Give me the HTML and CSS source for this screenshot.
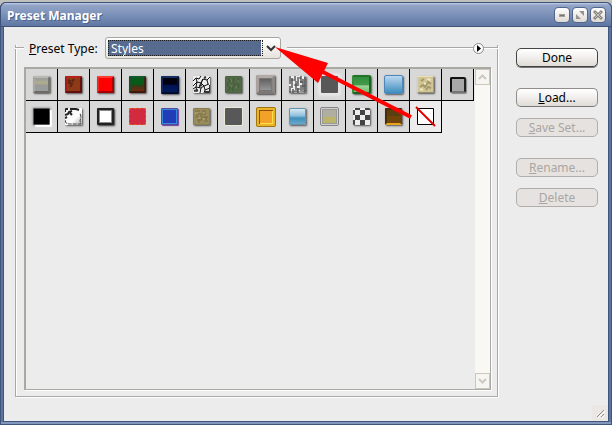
FILE: index.html
```html
<!DOCTYPE html>
<html lang="en">
<head>
  <meta charset="UTF-8">
  <meta name="viewport" content="width=device-width, initial-scale=1.0">
  <title>Preset Manager</title>
  <link rel="stylesheet" href="styles.css">
</head>
<body>
  <div class="window">
    <!-- Title bar -->
    <div class="title-bar">
      <h1>Preset Manager</h1>
      <div class="window-buttons">
        <button type="button" aria-label="Minimize"><svg width="14" height="14" viewBox="0 0 14 14"><path d="M4 6h6v3H4z" fill="#a19d98"/><path d="M5 7h4v1H5z" fill="#77736f"/></svg></button>
        <button type="button" aria-label="Maximize"><svg width="14" height="14" viewBox="0 0 14 14"><path d="M6 3h5v5zM3 6v5h5z" fill="#98948f"/></svg></button>
        <button type="button" aria-label="Close"><svg width="14" height="14" viewBox="0 0 14 14"><path d="M3 3l8 8M11 3l-8 8" stroke="#8a8681" stroke-width="3"/><path d="M4 4l6 6M10 4l-6 6" stroke="#c5c1bc"/></svg></button>
      </div>
    </div>

    <!-- Dialog -->
    <div class="dialog">
      <div class="group">
        <div class="group-head">
          <label for="presetType"><u>P</u>reset Type:</label>
          <div class="select-box">
            <select id="presetType">
              <option>Styles</option>
            </select>
            <svg class="chevron" width="10" height="8" viewBox="0 0 10 8"><path d="M1 2l4 4 4-4" fill="none" stroke="#333" stroke-width="2"/></svg>
          </div>
          <span class="rule"></span>
          <button type="button" class="menu-button" aria-label="Preset menu"><svg width="11" height="11" viewBox="0 0 11 11"><circle cx="5.500" cy="5.500" r="5" fill="#fff" stroke="#888"/><path d="M4 2v7l4-3.500z"/></svg></button>
          <span class="rule rule-end"></span>
        </div>
        <div class="list">
          <div class="tiles">
            <button type="button" class="tile" aria-label="Style 1"><span class="swatch stone"></span></button>
            <button type="button" class="tile" aria-label="Style 2"><span class="swatch brick"><svg width="13" height="13" viewBox="0 0 13 13"><path d="M1 2l2 1-1 2 3 1-2 3M7 1l-2 3" fill="none" stroke="#5e2410" stroke-width="2"/></svg></span></button>
            <button type="button" class="tile" aria-label="Style 3"><span class="swatch red"></span></button>
            <button type="button" class="tile" aria-label="Style 4"><span class="swatch forest"></span></button>
            <button type="button" class="tile" aria-label="Style 5"><span class="swatch navy"></span></button>
            <button type="button" class="tile" aria-label="Style 6"><span class="swatch marble"><svg width="17" height="17" viewBox="0 0 17 17"><path d="M0 5l3-3 3 1 2-3M3 2l1 4-4 4M4 6l4 1 2-4 4 1 3-3M10 3l-2 4 3 3 5-2M4 6l-1 5 5 1 3-2 1 4 5-2M3 11l-3 2M8 12l-1 5M3 11l1 5M12 14l-1 3M14 4l1 4M8 7l-2 5" fill="none" stroke="#111"/><path d="M1 15l4-1M12 16h5V9M9 9l-3 1M13 1l-2 1" fill="none" stroke="#333" stroke-width="2"/></svg></span></button>
            <button type="button" class="tile" aria-label="Style 7"><span class="swatch moss"><svg width="15" height="15" viewBox="0 0 15 15"><path d="M2 1l2 3-3 3 3 4-2 3M8 1l-1 4 2 3-3 3 1 3M13 1l-2 5 2 3-2 4" fill="none" stroke="#405638"/><path d="M5 2l1 3M10 9l1 3M4 8l2 2M12 3v3" fill="none" stroke="#6d835e"/></svg></span></button>
            <button type="button" class="tile" aria-label="Style 8"><span class="swatch steel"></span></button>
            <button type="button" class="tile" aria-label="Style 9"><span class="swatch bark"><svg width="17" height="17" viewBox="0 0 17 17"><path d="M1 0v8M1 10v7M3 2v10M4 13v4M6 0v5M7 5v9M9 1v9M9 12v5M12 0v7M12 9v6M14 3v11M16 1v15" stroke="#111"/><path d="M2 4h3M5 9h3M8 13h3M11 6h3M13 15h3M5 15h4M10 2h2M13 10h3" stroke="#444"/><path d="M16 0v17M0 16h17" stroke="#555"/></svg></span></button>
            <button type="button" class="tile" aria-label="Style 10"><span class="swatch glow"></span></button>
            <button type="button" class="tile" aria-label="Style 11"><span class="swatch green"></span></button>
            <button type="button" class="tile" aria-label="Style 12"><span class="swatch sky"></span></button>
            <button type="button" class="tile" aria-label="Style 13"><span class="swatch sand"><svg width="15" height="15" viewBox="0 0 15 15"><path d="M2 10l3-2 2 2 3-5 3 2M8 13l2-3 3 1M3 4l3-2" fill="none" stroke="#a59869" stroke-width="2"/><path d="M9 2l4 1M2 12l3 1M6 6l2 1" fill="none" stroke="#ece4bb" stroke-width="2"/></svg></span></button>
            <button type="button" class="tile" aria-label="Style 14"><span class="swatch outline"></span></button>
            <button type="button" class="tile" aria-label="Style 15"><span class="swatch black"></span></button>
            <button type="button" class="tile" aria-label="Style 16"><span class="swatch torn"><svg width="17" height="17" viewBox="0 0 17 17"><path d="M0 4V1h3M5 1h6l3 1M0 7l3-1 1-2 3-1M5 5l2 2M0 10l2-1" fill="none" stroke="#222" stroke-width="2"/><path d="M0 12l1 3 3 1h12l-1-3 1-4-1-4" fill="none" stroke="#444" stroke-dasharray="4 1"/></svg></span></button>
            <button type="button" class="tile" aria-label="Style 17"><span class="swatch white"></span></button>
            <button type="button" class="tile" aria-label="Style 18"><span class="swatch lava"></span></button>
            <button type="button" class="tile" aria-label="Style 19"><span class="swatch blue"></span></button>
            <button type="button" class="tile" aria-label="Style 20"><span class="swatch burlap"><svg width="15" height="15" viewBox="0 0 15 15"><path d="M1 2h5M8 2h4M4 5h7M1 8h4M8 8h6M3 11h5M10 12h4M3 3v4M7 6v5M11 3v3M12 8v3M5 10v4" stroke="#786c42"/><path d="M1 4h3M9 4h2M4 9h3M9 10h2" stroke="#b9ad7b"/></svg></span></button>
            <button type="button" class="tile" aria-label="Style 21"><span class="swatch grey"></span></button>
            <button type="button" class="tile" aria-label="Style 22"><span class="swatch gold"></span></button>
            <button type="button" class="tile" aria-label="Style 23"><span class="swatch water"></span></button>
            <button type="button" class="tile" aria-label="Style 24"><span class="swatch olive"></span></button>
            <button type="button" class="tile" aria-label="Style 25"><span class="swatch checker"></span></button>
            <button type="button" class="tile" aria-label="Style 26"><span class="swatch amber"></span></button>
            <button type="button" class="tile none" aria-label="No style"><svg width="21" height="21" viewBox="0 0 21 21"><path d="M2.500 2.500h16v16h-16z" fill="#fff" stroke="#000"/><path d="M1 1l19 19" stroke="#e00000" stroke-width="2"/></svg></button>
          </div>
          <div class="scrollbar">
            <button type="button" aria-label="Scroll up"><svg width="9" height="7" viewBox="0 0 9 7"><path d="M1 5l3.500-3.500L8 5" fill="none" stroke="#ccc8c2" stroke-width="2"/></svg></button>
            <button type="button" aria-label="Scroll down"><svg width="9" height="7" viewBox="0 0 9 7"><path d="M1 1l3.500 3.500L8 1" fill="none" stroke="#ccc8c2" stroke-width="2"/></svg></button>
          </div>
        </div>
      </div>

      <div class="actions">
        <button type="button" class="done">Done</button>
        <button type="button" class="spaced"><u>L</u>oad...</button>
        <button type="button" disabled><u>S</u>ave Set...</button>
        <button type="button" class="spaced" disabled><u>R</u>ename...</button>
        <button type="button" disabled><u>D</u>elete</button>
      </div>
    </div>
    <svg class="grip" width="16" height="16" viewBox="0 0 16 16"><path d="M5 12l7-7M9 12l3-3" stroke="#8f8c88"/><path d="M6 13l7-7M10 13l3-3" stroke="#fff"/></svg>

    <!-- Arrow pointing at the drop-down -->
    <svg class="arrow" width="140" height="75" viewBox="0 0 140 75"><path d="M1 2l53 16-10 20z" fill="#f00"/><path d="M47 26l90 46" stroke="#f00" stroke-width="4"/></svg>
  </div>
</body>
</html>
```

FILE: styles.css
```css
* {
  box-sizing: border-box;
}
body {
  margin: 0;
  padding-top: 2px;
  min-height: 100vh;
  display: flex;
  background-color: #c0c0bc;
  font-family: 'Noto Sans', sans-serif;
  font-size: 12px;
  color: #000;
}
button,
select {
  font: inherit;
  color: inherit;
  margin: 0;
  padding: 0;
}
svg {
  display: block;
}
.window {
  position: relative;
  flex: 1;
  display: flex;
  flex-direction: column;
  padding: 0 4px 4px;
  background-color: #5c759f;
  border-radius: 6px 6px 0 0;
  box-shadow: inset 1px 0 #41557b, inset -1px -1px #41557b, inset 0 -3px #8397bd;
}
.title-bar {
  display: flex;
  align-items: center;
  justify-content: space-between;
  height: 25px;
  margin: 0 -4px;
  padding: 1px 5px 0 6px;
  border: 1px solid #3f5378;
  border-bottom-color: #3b5079;
  border-radius: 6px 6px 0 0;
  background: linear-gradient(#c5d0e5 0, #93a5c8 2px, #8195bb 10px, #5d76a2 100%);
}
.title-bar h1 {
  margin: 0;
  font-size: 12px;
  font-weight: bold;
  color: #fff;
  text-shadow: 1px 1px #4b628c;
}
.window-buttons {
  display: flex;
  gap: 2px;
}
.window-buttons button {
  display: grid;
  place-items: center;
  width: 16px;
  height: 16px;
  border: 1px solid #52668b;
  border-radius: 4px;
  background: linear-gradient(#fff, #dedad5);
}
.dialog {
  flex: 1;
  display: flex;
  gap: 18px;
  padding: 10px 10px 24px 11px;
  background-color: #ececec;
  box-shadow: 0 0 0 1px #41557b;
}

/* Group frame */
.group {
  flex: 1;
  position: relative;
  display: flex;
  flex-direction: column;
  padding: 0 7px 7px 9px;
}
.group::before {
  content: '';
  position: absolute;
  inset: 8px 0 0;
  border: 1px solid #a8a8a4;
  border-top: none;
  box-shadow: inset 1px 0 #fff, 1px 1px #fff;
}
.group-head {
  position: relative;
  display: flex;
  align-items: center;
  height: 22px;
  margin: 0 -7px 8px -9px;
}
.group-head::before {
  content: '';
  width: 9px;
  height: 2px;
  margin-right: 5px;
  background: linear-gradient(#a8a8a4 50%, #fff 50%);
}
.group-head label {
  width: 76px;
  white-space: nowrap;
}
.rule {
  flex: 1;
  height: 2px;
  margin-left: 6px;
  background: linear-gradient(#a8a8a4 50%, #fff 50%);
}
.rule-end {
  flex: 0 0 14px;
  margin: 0;
}
.menu-button {
  border: none;
  background: none;
}
.select-box {
  position: relative;
  width: 176px;
  height: 22px;
}
.select-box select {
  appearance: none;
  width: 100%;
  height: 22px;
  padding: 0 18px 0 5px;
  border: 1px solid #a9a5a0;
  border-radius: 3px;
  outline: none;
  color: #fff;
  background: linear-gradient(#566b8e, #566b8e) 2px 2px / 153px 16px no-repeat, linear-gradient(#fff, #e7e3de);
}
.select-box::after {
  content: '';
  position: absolute;
  inset: 3px 18px 3px 3px;
  border: 1px dotted #1a1a1a;
  pointer-events: none;
}
.chevron {
  position: absolute;
  right: 5px;
  top: 7px;
  pointer-events: none;
}

/* Preset list */
.list {
  position: relative;
  flex: 1;
  display: flex;
  justify-content: space-between;
  border: 2px solid #a9a9a3;
  border-width: 2px 1px 1px 2px;
  box-shadow: 1px 1px #fff;
  background-color: #ececec;
}
.tiles {
  flex: 1;
  display: flex;
  flex-wrap: wrap;
  align-content: flex-start;
}
.tile {
  display: grid;
  place-items: center;
  width: 32px;
  height: 32px;
  border: solid #000;
  border-width: 0 1px 1px 0;
  background-color: #d8d8d8;
}
.tile.none {
  background-color: #ececec;
}
.swatch {
  width: 17px;
  height: 17px;
  overflow: hidden;
  border-radius: 1px;
  box-shadow: 1px 1px 2px #555;
}
.stone {
  border: 2px solid;
  border-color: #b9b8b2 #77756c #6e6c62 #a9a8a2;
  background: linear-gradient(#9a9c9c, #b1ae8c 40%, #9a9a94 55%, #969da2);
}
.brick {
  border: 2px solid;
  border-color: #b4221c #64110d #64110d #a51a14;
  background-color: #8f3a16;
}
.red {
  border: 2px solid;
  border-color: #ff3c32 #a80000 #a80000 #f02820;
  background-color: #f00;
}
.forest {
  border: 2px solid;
  border-color: #14572b #402010 #40180c #1c4d26;
  background: linear-gradient(#075b18 45%, #3a3a14 60%, #702b13);
}
.navy {
  width: 18px;
  height: 18px;
  border: 2px solid;
  border-color: #172f64 #04102e #020c2a #12275c;
  background: linear-gradient(#00000f 45%, #001252 50%, #001c5c);
}
.marble,
.bark {
  background-color: #eee;
}
.moss {
  border: 1px solid #4d6444;
  background-color: #526a45;
}
.steel {
  width: 19px;
  height: 19px;
  border: 3px solid;
  border-color: #b3aaa7 #8b8583 #7d7775 #aaa19e;
  background: linear-gradient(#5c5c5c, #9a9a9a);
  box-shadow: inset 0 0 0 1px #777, 1px 1px 2px #444;
}
.glow {
  background-color: #585858;
  box-shadow: 0 0 2px 3px #e6e6e6;
}
.green {
  width: 19px;
  height: 19px;
  border: 2px solid;
  border-color: #24732b #1c6424 #1c6424 #388c3c;
  border-radius: 2px;
  background: linear-gradient(#2f8e3c, #459a4a 50%, #a0d29c 60%, #6ac068);
}
.sky {
  width: 19px;
  height: 19px;
  border: 1px solid #4d86b8;
  border-radius: 2px;
  background: linear-gradient(#bcd8f0, #3d8dbd);
}
.sand {
  border: 1px solid;
  border-color: #ece3b8 #a69c72 #978d68 #dfd5aa;
  background-color: #cfc596;
}
.outline {
  width: 16px;
  height: 16px;
  border: 2px solid;
  border-color: #111 #222 #777 #111;
  border-radius: 2px;
  background-color: #a8a8a8;
  box-shadow: 1px 1px 1px #888;
}
.black {
  border: 1px solid #555;
  background-color: #000;
  box-shadow: 2px 2px 1px #fff, 0 0 2px 1px #aaa;
}
.torn {
  background: linear-gradient(135deg, #eee, #fff 60%, #aaa);
}
.white {
  border: 2px solid #222;
  background-color: #fff;
  box-shadow: inset 0 0 0 1px #888, 1px 1px 2px #333;
}
.lava {
  border: 1px dashed #e25a22;
  background: repeating-linear-gradient(45deg, #d82a36 0 2px, #cc2c48 2px 4px);
  box-shadow: none;
}
.blue {
  border: 1px solid #54489a;
  background-color: #203cb6;
  box-shadow: inset 0 0 0 1px #3987dc, 1px 1px 1px #6d3d9b;
}
.burlap {
  border: 1px solid #8a7e54;
  background-color: #998d5c;
}
.grey {
  background-color: #585858;
  box-shadow: 0 0 0 1px #e9e9da;
}
.gold {
  width: 20px;
  height: 20px;
  border: 3px solid #e9b62a;
  border-radius: 2px;
  outline: 1px solid #a4740c;
  outline-offset: -1px;
  background-color: #f3a229;
  box-shadow: inset 1px 1px #8f4d10, inset -1px -1px #ffdc4a;
}
.water {
  border: 1px solid #6892ac;
  background: linear-gradient(#d6eaf4, #8fc0da 45%, #3f8fbb 60%, #68a8ca);
}
.olive {
  border: 1px solid #d0d0d0;
  outline: 1px solid #858585;
  background: linear-gradient(#b0aea0 50%, #bbb56c 55%);
  box-shadow: inset 0 0 0 1px #999;
}
.checker {
  background: repeating-conic-gradient(#444 0 90deg, #eee 90deg 180deg) 2px 2px / 10px 10px;
}
.amber {
  border: 2px solid;
  border-color: #4a2c06 #6b430a #e9a51e #4a2c06;
  background: linear-gradient(#5c3f10 50%, #714508 50%);
}
.scrollbar {
  display: flex;
  flex-direction: column;
  justify-content: space-between;
  width: 15px;
  background-color: #f9f8f5;
}
.scrollbar button {
  display: grid;
  place-items: center;
  width: 15px;
  height: 16px;
  border: 1px solid #cdc7b9;
  background-color: #f7f5f1;
}

/* Action buttons */
.actions {
  display: flex;
  flex-direction: column;
  width: 82px;
  padding-top: 11px;
}
.actions button {
  height: 19px;
  margin-bottom: 11px;
  border: 1px solid #8f8c89;
  border-bottom-color: #777;
  border-radius: 5px;
  line-height: 17px;
  background: linear-gradient(#fff, #f1efed 50%, #dfdbd6);
}
.actions .done {
  border-color: #444;
  box-shadow: 0 1px #777;
}
.actions .spaced {
  margin-top: 10px;
}
.actions button:disabled {
  border-color: #b1adaa;
  color: #aaa6a3;
  background: #e6e2df;
}
.grip {
  position: absolute;
  right: 4px;
  bottom: 4px;
  background-color: #ebe7e4;
}
.arrow {
  position: absolute;
  left: 274px;
  top: 43px;
  pointer-events: none;
}
```
